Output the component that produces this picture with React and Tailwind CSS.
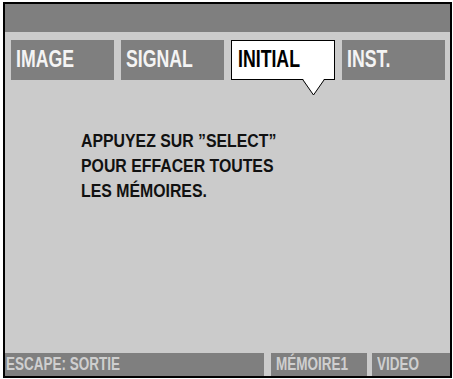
import React from "react";

const tabs = [
  { label: "IMAGE", active: false },
  { label: "SIGNAL", active: false },
  { label: "INITIAL", active: true },
  { label: "INST.", active: false },
];

// condensed look: Arial-metric bold squeezed horizontally
const Narrow = ({ className = "", children }) => (
  <span className={"inline-block origin-left whitespace-nowrap " + className}>{children}</span>
);

export default function App() {
  return (
    <div
      className="w-[453px] h-[379px] bg-white pl-[3px] pt-[2px]"
      style={{ fontFamily: '"Liberation Sans", Arial, sans-serif' }}
    >
      <div className="w-[449px] h-[376px] border-2 border-black bg-[#cbcbcb] flex flex-col">
        <div className="h-[28px] bg-[#7f7f7f]" />

        <div className="flex gap-[7px] pl-[6px] pr-[5px] mt-[8px]">
          {tabs.map((tab) =>
            tab.active ? (
              <div key={tab.label} className="relative w-[104px] h-[40px] bg-white border border-black">
                <div className="pl-[6px] pt-[5px] text-[23px] leading-[26px] font-bold text-black">
                  <Narrow className="scale-x-[0.77]">{tab.label}</Narrow>
                </div>
                <svg className="absolute left-[70px] top-[38px]" width="23" height="18" viewBox="0 0 23 18">
                  <polygon points="1,0 22,0 11.5,16" fill="white" />
                  <polyline points="1,1 11.5,16 22,1" fill="none" stroke="black" strokeWidth="1" />
                </svg>
              </div>
            ) : (
              <div key={tab.label} className="w-[103px] h-[40px] bg-[#7f7f7f]">
                <div className="pl-[5px] pt-[6px] text-[23px] leading-[26px] font-bold text-[#f4f4f4]">
                  <Narrow className="scale-x-[0.77]">{tab.label}</Narrow>
                </div>
              </div>
            )
          )}
        </div>

        <div className="pl-[76px] pt-[49px] text-[18px] leading-[25px] font-bold text-[#111]">
          <div><Narrow className="scale-x-[0.88]">APPUYEZ SUR ”SELECT”</Narrow></div>
          <div><Narrow className="scale-x-[0.88]">POUR EFFACER TOUTES</Narrow></div>
          <div><Narrow className="scale-x-[0.88]">LES MÉMOIRES.</Narrow></div>
        </div>

        <div className="mt-auto flex h-[23px] text-[18px] leading-[23px] font-bold text-[#cfcfcf]">
          <div className="w-[259px] bg-[#7f7f7f] pl-[1px]">
            <Narrow className="scale-x-[0.75]">ESCAPE: SORTIE</Narrow>
          </div>
          <div className="w-[96px] ml-[7px] bg-[#7f7f7f] pl-[5px]">
            <Narrow className="scale-x-[0.75]">MÉMOIRE1</Narrow>
          </div>
          <div className="flex-1 ml-[5px] bg-[#7f7f7f] pl-[5px]">
            <Narrow className="scale-x-[0.75]">VIDEO</Narrow>
          </div>
        </div>
      </div>
    </div>
  );
}
